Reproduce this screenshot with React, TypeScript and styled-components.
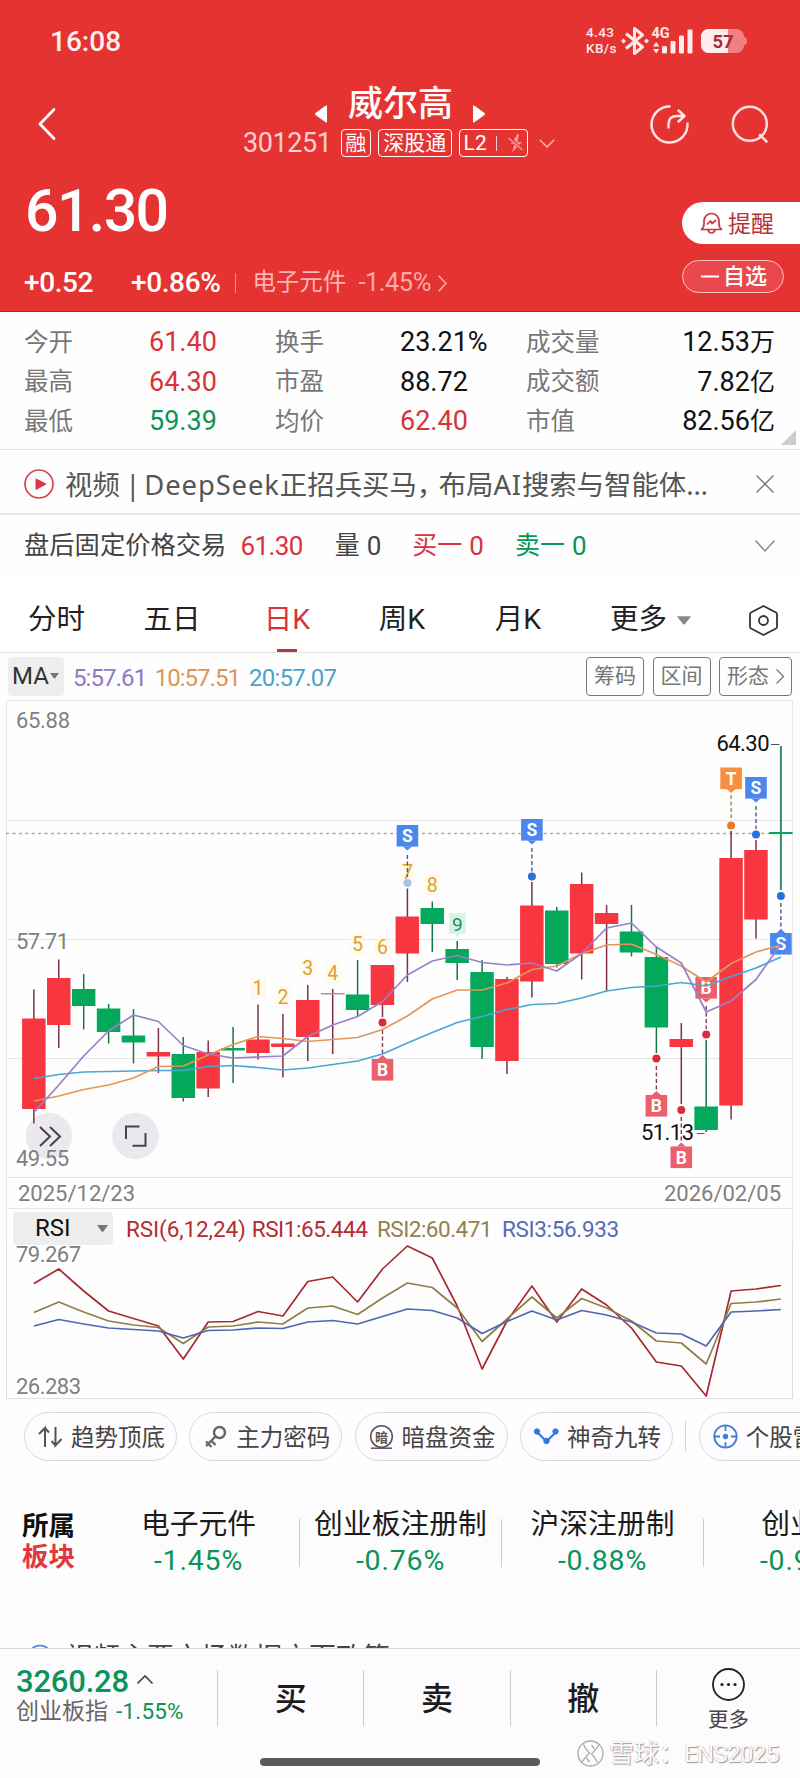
import React from 'react';
import styled, { createGlobalStyle } from 'styled-components';

const RED = '#e53332';
const UP = '#d8333a';
const DOWN = '#0a9457';
const FONT = `Roboto, "Noto Sans CJK SC", sans-serif`;

const Global = createGlobalStyle`
  * { box-sizing: border-box; }
  body { margin: 0; background: #fff; font-family: ${FONT}; color: #222; }
  svg { display: block; flex: none; overflow: visible; }
`;

const Page = styled.main`
  position: relative;
  display: flex;
  flex-direction: column;
  width: 800px;
  height: 1778px;
  overflow: hidden;
  background: #fefefe;
`;

const Txt = styled.span<{ s: number; c?: string; ls?: number; w?: number; ml?: number; mt?: number }>`
  flex: none;
  font-size: ${(p) => p.s}px;
  line-height: 1;
  white-space: nowrap;
  color: ${(p) => p.c ?? 'inherit'};
  letter-spacing: ${(p) => p.ls ?? 0}px;
  font-weight: ${(p) => p.w ?? 400};
  margin-left: ${(p) => p.ml ?? 0}px;
  margin-top: ${(p) => p.mt ?? 0}px;
`;

/* ---------- header ---------- */
const Header = styled.header`
  height: 312px;
  flex: none;
  background: ${RED};
  border-bottom: 1px solid #a32a2c;
  color: #fff;
`;
const StatusBar = styled.div`
  display: flex;
  align-items: center;
  height: 82px;
  padding: 0 53px 0 50px;
`;
const StatusIcons = styled.div`
  display: flex;
  align-items: center;
  margin-left: auto;
  color: #ffe9e9;
`;
const Speed = styled.div`
  display: flex;
  flex-direction: column;
  gap: 2px;
  width: 36px;
  padding-bottom: 3px;
  font-size: 13.5px;
  line-height: 14px;
  font-weight: 500;
  letter-spacing: 0.4px;
`;
const NavBar = styled.div`
  display: flex;
  height: 84px;
  padding: 0 48px 0 37px;
`;
const IconSlot = styled.div<{ w: number; pull?: number }>`
  display: flex;
  align-items: center;
  flex: none;
  width: ${(p) => p.w}px;
  margin-left: ${(p) => -(p.pull ?? 0)}px;
`;
const Title = styled.div`
  flex: none;
  width: 435px;
`;
const TitleLine = styled.div`
  display: flex;
  align-items: center;
  height: 44px;
  padding-left: 72px;
`;
const CodeLine = styled.div`
  display: flex;
  align-items: center;
  height: 34px;
`;
const Badge = styled.div<{ w: number; ml: number }>`
  display: flex;
  align-items: center;
  justify-content: center;
  width: ${(p) => p.w}px;
  height: 28px;
  margin-left: ${(p) => p.ml}px;
  border: 1.5px solid #fff;
  border-radius: 4px;
  font-size: 21px;
  line-height: 1;
  white-space: nowrap;
`;
const VBar = styled.i<{ h: number; c: string; ml?: number; mr?: number; w?: number }>`
  flex: none;
  width: ${(p) => p.w ?? 1}px;
  height: ${(p) => p.h}px;
  background: ${(p) => p.c};
  margin: 0 ${(p) => p.mr ?? 0}px 0 ${(p) => p.ml ?? 0}px;
`;
const Quote = styled.div`
  display: flex;
  justify-content: space-between;
`;
const PriceLine = styled.div`
  display: flex;
  align-items: center;
  height: 88px;
  padding-left: 25px;
`;
const ChangeLine = styled.div`
  display: flex;
  align-items: center;
  height: 58px;
  padding-left: 24px;
`;
const Actions = styled.div`
  width: 118px;
  padding-top: 36px;
`;
const Remind = styled.div`
  display: flex;
  align-items: center;
  height: 42px;
  padding-left: 18px;
  border-radius: 21px 0 0 21px;
  background: #fff;
`;
const Watch = styled.div`
  display: flex;
  align-items: center;
  width: 102px;
  height: 33px;
  margin-top: 16px;
  padding-left: 17px;
  border: 1px solid #ffc4c6;
  border-radius: 17px;
  background: #e9494c;
`;

/* ---------- quote table ---------- */
const Stats = styled.section`
  position: relative;
  flex: none;
  height: 138px;
  padding: 11px 25px 0 24px;
  border-bottom: 1px solid #dfdfdf;
`;
const StatRow = styled.div`
  display: grid;
  grid-template-columns: 125px 126px 125px 126px 1fr 130px;
  align-items: center;
  height: 39.5px;
  font-size: 24.5px;
  line-height: 1;
  color: #777;
  white-space: nowrap;
`;
const Val = styled.b<{ c?: string; end?: boolean }>`
  font-size: 27px;
  font-weight: 400;
  color: ${(p) => p.c ?? '#111'};
  text-align: ${(p) => (p.end ? 'right' : 'left')};
  & > small { font-size: 25px; }
`;
const Corner = styled.i`
  position: absolute;
  right: 4px;
  bottom: 4px;
  border-style: solid;
  border-width: 0 0 15px 15px;
  border-color: transparent transparent #ccc transparent;
`;
const News = styled.section`
  display: flex;
  align-items: center;
  flex: none;
  height: 65px;
  padding: 5px 26px 0 24px;
  border-bottom: 2px solid #e4e4e4;
`;
const NewsText = styled.div`
  flex: 1;
  margin: 2px 0 0 11px;
  font: 27.4px/1 "Noto Sans", "Noto Sans CJK SC", sans-serif;
  color: #555;
  white-space: nowrap;
`;
const Kern = styled.span<{ ls: number; mr?: number }>`
  letter-spacing: ${(p) => p.ls}px;
  margin-right: ${(p) => p.mr ?? 0}px;
`;
const AfterHours = styled.section`
  display: flex;
  align-items: center;
  flex: none;
  height: 61px;
  padding: 0 25px;
  color: #444;
`;
const Spring = styled.i`
  flex: 1;
`;

/* ---------- tabs / toolbar ---------- */
const Tabs = styled.nav`
  display: grid;
  grid-template-columns: 113px 118px 112px 118px 114px 151px 1fr;
  flex: none;
  height: 77px;
  border-bottom: 1px solid #e4e4e4;
  background: #fff;
`;
const Tab = styled.div<{ on?: boolean }>`
  position: relative;
  display: flex;
  align-items: center;
  justify-content: center;
  gap: 10px;
  font-size: 28.5px;
  line-height: 1;
  white-space: nowrap;
  padding-top: 12px;
  color: ${(p) => (p.on ? UP : '#222')};
  &::after {
    content: '';
    position: absolute;
    bottom: 0;
    left: calc(50% - 10px);
    width: 20px;
    height: 3px;
    background: ${(p) => (p.on ? '#c0343e' : 'transparent')};
  }
`;
const Toolbar = styled.div`
  display: flex;
  align-items: center;
  flex: none;
  height: 47px;
  padding: 0 8px 1px 8px;
`;
const Picker = styled.div<{ w: number; h: number; pl: number }>`
  display: flex;
  align-items: center;
  justify-content: space-between;
  width: ${(p) => p.w}px;
  height: ${(p) => p.h}px;
  padding: 0 5px 0 ${(p) => p.pl}px;
  border-radius: 4px;
  background: #eee;
  color: #333;
`;
const Tool = styled.div<{ w: number }>`
  display: flex;
  align-items: center;
  justify-content: center;
  gap: 7px;
  width: ${(p) => p.w}px;
  height: 39px;
  margin-left: 8.5px;
  padding-top: 1px;
  border: 1px solid #777;
  border-radius: 4px;
  font-size: 21px;
  line-height: 1;
  color: #777;
`;
const Dates = styled.div`
  display: flex;
  align-items: center;
  justify-content: space-between;
  flex: none;
  height: 31px;
  margin: 0 7px 0 6px;
  padding: 2px 11px 0 11px;
  border: 1px solid #e6e6e6;
  border-top: 0;
  color: #808080;
`;
const RsiHead = styled.div`
  display: flex;
  align-items: center;
  flex: none;
  height: 37px;
  margin: 0 7px 0 6px;
  padding: 1px 0 0 6px;
  border: solid #e6e6e6;
  border-width: 0 1px;
`;

/* ---------- pills ---------- */
const Pills = styled.section`
  display: flex;
  align-items: center;
  flex: none;
  height: 75px;
  padding-left: 24px;
  overflow: hidden;
`;
const Pill = styled.div`
  display: flex;
  align-items: center;
  gap: 8px;
  flex: none;
  width: 153px;
  height: 49px;
  margin-right: 12.3px;
  padding-left: 13px;
  border: 1px solid #dadada;
  border-radius: 25px;
  background: #fefcfe;
  color: #444;
`;
const Sector = styled.section`
  display: flex;
  flex: none;
  height: 127px;
  overflow: hidden;
`;
const SectorLabel = styled.div`
  width: 95px;
  flex: none;
  padding: 36px 0 0 22px;
  font-size: 26.5px;
  line-height: 31px;
  font-weight: 700;
  color: #111;
  & > em { display: block; font-style: normal; color: #e0393f; }
`;
const SectorList = styled.div`
  display: flex;
  align-items: center;
  flex: none;
  padding: 10px 0 0 3px;
  background: #fdfcfd;
`;
const SectorItem = styled.div`
  display: flex;
  flex-direction: column;
  align-items: center;
  gap: 8px;
  width: 201px;
`;
const Peek = styled.section`
  display: flex;
  align-items: flex-start;
  flex: none;
  height: 47px;
  padding: 44px 0 0 28px;
  overflow: hidden;
  color: #444;
`;

/* ---------- bottom bar ---------- */
const Bottom = styled.footer`
  display: flex;
  flex: none;
  height: 132px;
  padding-top: 21px;
  border-top: 1px solid #d8d8d8;
  background: #fdfbfd;
`;
const IndexBox = styled.div`
  width: 217px;
  margin-top: -4px;
  padding-left: 16px;
`;
const IndexLine = styled.div<{ h: number }>`
  display: flex;
  align-items: center;
  height: ${(p) => p.h}px;
`;
const Trade = styled.div`
  display: flex;
  align-items: center;
  justify-content: center;
  width: 146.4px;
  height: 56px;
  padding-top: 2px;
  border-left: 1px solid #ccc;
  font-size: 32px;
  font-weight: 500;
  line-height: 1;
  color: #1c1c1c;
`;
const More = styled.div`
  display: flex;
  flex-direction: column;
  align-items: center;
  width: 144px;
  height: 56px;
  gap: 9px;
  border-left: 1px solid #ccc;
  & > svg { margin-top: -2px; }
`;
const HomeBar = styled.i`
  position: absolute;
  left: 260px;
  bottom: 12px;
  width: 280px;
  height: 8px;
  border-radius: 4px;
  background: #5b5b5b;
`;
const Watermark = styled.div`
  position: absolute;
  left: 577px;
  bottom: 11px;
  display: flex;
  align-items: center;
  gap: 5px;
  font-size: 25px;
  line-height: 1;
  color: #fafafa;
  text-shadow: 1px 1px 1px #999, -0.5px -0.5px 0.5px #c4c4c4;
  white-space: nowrap;
  & em { font-style: normal; font-size: 24px; letter-spacing: -0.6px; }
`;

/* ---------- chart data ---------- */
const cx = (i: number) => 33.9 + 24.9 * i;
type Candle = [number, number, number, number, 'r' | 'g' | 'd'];
const candles: Candle[] = [
  [989.5, 1018.5, 1109, 1123.5, 'r'], [959.5, 978, 1025, 1048, 'r'], [974, 989, 1006, 1029.5, 'g'],
  [1004, 1008.5, 1032, 1043.5, 'g'], [1009, 1035.5, 1042.5, 1063.5, 'g'], [1028, 1052, 1056.5, 1073, 'r'],
  [1037, 1054, 1098, 1101.5, 'g'], [1040.5, 1052, 1088.5, 1097, 'r'], [1027, 1048, 1050.5, 1083, 'g'],
  [1004.5, 1039.5, 1053, 1059.5, 'r'], [1014, 1043.5, 1047, 1077.5, 'r'], [985, 1000, 1037, 1061, 'r'],
  [989, 993, 994.5, 1054, 'd'], [960, 994.5, 1010, 1016, 'g'], [965, 965, 1005, 1017, 'r'],
  [888.5, 916.5, 953.5, 982, 'r'], [901.5, 908, 924, 952, 'g'], [941, 949, 963, 980, 'g'],
  [960, 972, 1047, 1059, 'g'], [977, 979, 1061, 1074, 'r'], [882, 905.5, 981.5, 997.5, 'r'],
  [907, 910.5, 964, 967.5, 'g'], [872.5, 884, 953.5, 979.5, 'r'], [905, 913, 924, 991, 'r'],
  [905, 931.5, 952.5, 956.5, 'g'], [946, 957, 1027.5, 1053, 'g'], [1023, 1039, 1047, 1104, 'r'],
  [1040, 1106.5, 1130, 1132, 'g'], [831, 858, 1105.5, 1119.5, 'r'], [840, 850, 919.5, 938.5, 'r'],
  [746, 832, 834, 890, 'g'],
];
const ma5 = [1112.5, 1085, 1056, 1031, 1015, 1021.5, 1045.5, 1054, 1058, 1057, 1056, 1036.5, 1025, 1016.5, 1001.5, 975, 961, 955.5, 962.5, 965, 963, 971, 953.5, 928, 923, 947, 963, 1012, 1001, 979.5, 944];
const ma10 = [1101, 1096, 1089.5, 1085, 1078, 1066.5, 1066, 1055, 1044.5, 1036.5, 1038.5, 1041.5, 1039.5, 1037.5, 1029.5, 1016, 999, 990, 990, 983, 969.5, 966, 953.5, 945, 944, 954.5, 966, 982, 963.5, 952, 945];
const ma20 = [1078.5, 1074.5, 1072, 1071.5, 1071, 1070.5, 1070.5, 1066.5, 1065.5, 1067.5, 1070, 1068, 1064.5, 1061, 1054, 1043, 1032.5, 1022.5, 1016.5, 1009.5, 1004.5, 1003.5, 998, 991, 987.5, 986, 982.5, 986, 976.5, 968, 957];
const rsi1 = [1283.5, 1269, 1291, 1311, 1318.5, 1326, 1359, 1322, 1321.5, 1311.5, 1316, 1281.5, 1277, 1302, 1269, 1246, 1258, 1306, 1369, 1321, 1286, 1322, 1289, 1305, 1328, 1362, 1366, 1396, 1291, 1289, 1285.5];
const rsi2 = [1312.5, 1302, 1312, 1321, 1325, 1327.5, 1343.5, 1327, 1326, 1322, 1324, 1308, 1306, 1314.5, 1298, 1283, 1287.5, 1308, 1341.5, 1319, 1297, 1318, 1298.5, 1308, 1321, 1341, 1343, 1364, 1303.5, 1302, 1299];
const rsi3 = [1326, 1319.5, 1324, 1328, 1329.5, 1331, 1338, 1330.5, 1330, 1328, 1328.5, 1322, 1320.5, 1324, 1316.5, 1309, 1310.5, 1318, 1333.5, 1321.5, 1311, 1320, 1310.5, 1315, 1322, 1333, 1334, 1346, 1312, 1311, 1309.5];
const line = (ys: number[]) => ys.map((y, i) => `${cx(i)},${y}`).join(' ');

const BLUE = '#4a88ee';
const PINK = '#ec5f6d';
type Mark = { i: number; t: string; y: number; dir: 1 | -1; fill: string; dot: number; dc: string; d: [number, number] };
const marks: Mark[] = [
  { i: 15, t: 'S', y: 825, dir: 1, fill: BLUE, dot: 883, dc: '#a9c2ea', d: [855, 877] },
  { i: 20, t: 'S', y: 819, dir: 1, fill: BLUE, dot: 876.5, dc: '#2a70dc', d: [848, 872] },
  { i: 28, t: 'T', y: 767.5, dir: 1, fill: '#f78e42', dot: 825.5, dc: '#ee7820', d: [795, 818] },
  { i: 29, t: 'S', y: 777, dir: 1, fill: BLUE, dot: 834.5, dc: '#2a70dc', d: [806, 829] },
  { i: 30, t: 'S', y: 933, dir: -1, fill: BLUE, dot: 896, dc: '#2a70dc', d: [903, 930] },
  { i: 14, t: 'B', y: 1059, dir: -1, fill: PINK, dot: 1022.5, dc: '#db2c3c', d: [1030, 1056] },
  { i: 25, t: 'B', y: 1095, dir: -1, fill: PINK, dot: 1058.5, dc: '#db2c3c', d: [1066, 1092] },
  { i: 26, t: 'B', y: 1146.5, dir: -1, fill: PINK, dot: 1110, dc: '#db2c3c', d: [1117, 1143] },
  { i: 27, t: 'B', y: 977, dir: 1, fill: PINK, dot: 1034.5, dc: '#db2c3c', d: [1006, 1029] },
];
const turns: [number, string, number][] = [
  [9, '1', 995], [10, '2', 1004], [11, '3', 975], [12, '4', 979.5], [13, '5', 950.5], [14, '6', 954], [15, '7', 879], [16, '8', 892],
];

const Label = ({ x, y, w, c = '#808080', s = 22, children }: { x: number; y: number; w: number; c?: string; s?: number; children: string }) => (
  <text x={x} y={y} fontSize={s} fill={c} textLength={w} fontFamily={FONT}>{children}</text>
);

const KChart = () => (
  <svg width="800" height="478" viewBox="0 700 800 478">
    <g stroke="#e6e6e6" fill="none">
      <path d="M6.5 700.5H792.5M6.5 820.5H792.5M6.5 939.5H792.5M6.5 1058.5H792.5M6.5 1177.5H792.5M6.5 700.5V1178M792.5 700.5V1178" />
    </g>
    <path d="M6 833.5H770" stroke="#b3ac85" strokeWidth="1.4" strokeDasharray="3.2 3.2" />
    <g fill="#e9e7eb" fillOpacity=".92">
      <circle cx="49" cy="1136" r="23.3" />
      <circle cx="135.5" cy="1136" r="23.3" />
    </g>
    <path d="M40 1127l10 9.500-10 9.500M50 1127l10 9.500-10 9.500M126 1139v-12.500h13.500M145.500 1133v12.700h-13" fill="none" stroke="#444" strokeWidth="2" />
    {candles.map(([h, t, b, l, k], i) => {
      const body = k === 'r' ? '#f8363f' : k === 'g' ? '#04a85a' : '#b58fa0';
      const wick = k === 'g' ? '#14744a' : '#7c3044';
      return (
        <g key={i}>
          <path d={`M${cx(i)} ${h}V${l}`} stroke={i === 30 ? '#2f9068' : wick} strokeWidth={i === 30 ? 2 : 1.5} />
          <rect x={cx(i) - 11.8} y={t} width="23.500" height={b - t} fill={body} />
        </g>
      );
    })}
    {turns.map(([i, t, y]) => (
      <g key={t}>
        <rect x={cx(i) - 8} y={y - 18} width="16" height="22" fill="#fff7e4" fillOpacity=".6" />
        <text x={cx(i)} y={y} fontSize="19.500" textAnchor="middle" fill="#dfa02c" fontFamily={FONT}>{t}</text>
      </g>
    ))}
    <path d="M449 913h16.500v21h-5.500l-2.700 3-2.700-3h-5.600z" fill="#d6f3e6" />
    <text x="457.300" y="930.500" fontSize="19" textAnchor="middle" fill="#17945f" fontFamily={FONT}>9</text>
    <Label x={641} y={1139.500} w={53} c="#111">51.13</Label>
    <Label x={716.500} y={751} w={53} c="#111">64.30</Label>
    <path d="M771 744.500h8.500M697 1133.500h7.500" stroke="#555" />
    {marks.map((m) => {
      const x = cx(m.i);
      const edge = m.dir === 1 ? m.y + 21.5 : m.y;
      return (
        <g key={m.i}>
          <path d={`M${x} ${m.d[0]}V${m.d[1]}`} stroke={m.t === 'S' ? '#4c5a80' : m.t === 'T' ? '#b08048' : '#85384e'} strokeWidth="1.4" strokeDasharray="4 2.500" />
          <circle cx={x} cy={m.dot} r="4" fill={m.dc} />
          <rect x={x - 10.8} y={m.y} width="21.600" height="21.600" fill={m.fill} />
          <path d={`M${x - 4.5} ${edge}h9l-4.500 ${4 * m.dir}z`} fill={m.fill} />
          <text x={x} y={m.y + 17} fontSize="17.500" fontWeight="700" textAnchor="middle" fill="#fff" fontFamily={FONT}>{m.t}</text>
        </g>
      );
    })}
    <g fill="none" strokeWidth="1.700" strokeLinejoin="round">
      <polyline points={line(ma20)} stroke="#4aa6d3" />
      <polyline points={line(ma10)} stroke="#e2965a" />
      <polyline points={line(ma5)} stroke="#9a80c8" />
    </g>
    <Label x={16} y={728} w={54}>65.88</Label>
    <Label x={16} y={949} w={53}>57.71</Label>
    <Label x={16} y={1165.500} w={53}>49.55</Label>
  </svg>
);

const RsiChart = () => (
  <svg width="800" height="153" viewBox="0 1246 800 153">
    <path d="M6.500 1246V1398.500H792.500V1246" stroke="#dedede" fill="none" />
    <Label x={16} y={1262} w={65}>79.267</Label>
    <Label x={16} y={1394} w={65}>26.283</Label>
    <g fill="none" strokeWidth="1.700" strokeLinejoin="round">
      <polyline points={line(rsi1)} stroke="#a82830" />
      <polyline points={line(rsi2)} stroke="#8f7d48" />
      <polyline points={line(rsi3)} stroke="#4f66b0" />
    </g>
  </svg>
);

const Caret = ({ w = 9, c = '#777' }) => (
  <svg width={w} height={w * 0.62} viewBox="0 0 10 6"><path d="M0 0h10L5.800 5.700q-.8.600-1.600 0z" fill={c} /></svg>
);

const Shift = styled.span<{ l?: number; t?: number; b?: number }>`
  flex: none;
  margin: ${(p) => p.t ?? 0}px 0 ${(p) => p.b ?? 0}px ${(p) => p.l ?? 0}px;
`;

const stats = [
  ['今开', '61.40', UP, '换手', '23.21%', '', '成交量', '12.53', '万'],
  ['最高', '64.30', UP, '市盈', '88.72', '', '成交额', '7.82', '亿'],
  ['最低', '59.39', DOWN, '均价', '62.40', UP, '市值', '82.56', '亿'],
];
const sectors = [['电子元件', '-1.45%'], ['创业板注册制', '-0.76%'], ['沪深注册制', '-0.88%'], ['创业板', '-0.95%']];

export default function App() {
  return (
    <Page>
      <Global />
      <Header>
        <StatusBar>
          <Txt s={28} w={500} c="#ffeeee" mt={1}>16:08</Txt>
          <StatusIcons>
            <Speed><span>4.43</span><span>KB/s</span></Speed>
            <svg width="26" height="28" viewBox="0 0 26 28" fill="none" stroke="currentColor" strokeWidth="3" strokeLinejoin="round">
              <path d="M4 6.500l16.500 13.500-8 6.500v-25l8 6.500L4 21.500" />
              <path d="M1.500 11.500L4 14l-2.500 2.500L-1 14zM24.500 11.500L27 14l-2.500 2.500L22 14z" fill="currentColor" stroke="none" />
            </svg>
            <Shift l={4}>
              <svg width="42" height="28" viewBox="0 0 42 28" fill="currentColor">
                <text x="-.5" y="10.500" fontSize="14.500" fontWeight="700" fontFamily={FONT}>4G</text>
                <path d="M1 19.500l3.200-4.500 3.200 4.500zM1 22l3.200 4.500L7.400 22z" />
                <rect x="10" y="19" width="5" height="7.500" rx="1.200" /><rect x="18.500" y="14" width="5" height="12.500" rx="1.200" />
                <rect x="27" y="8.500" width="5" height="18" rx="1.200" /><rect x="35.500" y="2.500" width="5" height="24" rx="1.200" />
              </svg>
            </Shift>
            <Shift l={7}>
              <svg width="46" height="24" viewBox="0 0 46 24">
                <rect width="43" height="24" rx="7.500" fill="#f28083" /><path d="M43 7.500q3 1 3 4.500t-3 4.500z" fill="#f28083" />
                <path d="M7.500 0H27v24H7.500A7.500 7.500 0 0 1 0 16.500v-9A7.500 7.500 0 0 1 7.500 0z" fill="#ffefef" />
                <text x="22" y="18.500" fontSize="18.500" fontWeight="700" textAnchor="middle" fill="#a82c33" fontFamily={FONT}>57</text>
              </svg>
            </Shift>
          </StatusIcons>
        </StatusBar>
        <NavBar>
          <IconSlot w={206}>
            <svg width="20" height="32" viewBox="0 0 20 32"><path d="M17 1.500L3 16l14 14.500" fill="none" stroke="#fff" strokeWidth="2.800" strokeLinecap="round" strokeLinejoin="round" /></svg>
          </IconSlot>
          <Title>
            <TitleLine>
              <Shift t={20}><svg width="12" height="18" viewBox="0 0 12 18"><path d="M12 1v16q-.3 1-1.500.3L.5 10Q-.5 9 .5 8L10.500.7Q11.700 0 12 1z" fill="#fff" /></svg></Shift>
              <Txt s={35} w={500} ml={21} mt={1}>威尔高</Txt>
              <Shift t={20} l={20}><svg width="12" height="18" viewBox="0 0 12 18"><path d="M0 1v16q.3 1 1.500.3L11.500 10q1-1 0-2L1.500.7Q.3 0 0 1z" fill="#fff" /></svg></Shift>
            </TitleLine>
            <CodeLine>
              <Txt s={27} c="#ffcfcf" ls={-0.4}>301251</Txt>
              <Badge w={30} ml={9}>融</Badge>
              <Badge w={74} ml={7}>深股通</Badge>
              <Badge w={69} ml={7}>
                L2
                <VBar h={15} c="#ffd0d0" ml={9} mr={12} />
                <svg width="14" height="19" viewBox="0 0 14 19"><path d="M8.500 0L2 10h3.500L3 18.500 13 8H8.500L10 0z" fill="#f79a9c" /><path d="M-.5 2.500l14 14" stroke={RED} strokeWidth="3" /><path d="M-.5 4l14 12" stroke="#f79a9c" strokeWidth="1.500" /></svg>
              </Badge>
              <Shift l={11}><svg width="16" height="9" viewBox="0 0 16 9"><path d="M.7.7L8 8 15.300.7" fill="none" stroke="#ffb0b0" strokeWidth="1.500" /></svg></Shift>
            </CodeLine>
          </Title>
          <IconSlot w={81} pull={28}>
            <svg width="39" height="39" viewBox="0 0 39 39" fill="none" stroke="#ffe6e6" strokeWidth="2.400" strokeLinecap="round">
              <path d="M19.500 1.500A18 18 0 1 0 37.500 18.500" /><path d="M18.500 22.500v-3q0-8.500 8.500-8.500h7M28.500 5.500l6 5.500-6 5.500" strokeLinejoin="round" />
            </svg>
          </IconSlot>
          <IconSlot w={38}>
            <svg width="38" height="38" viewBox="0 0 38 38" fill="none" stroke="#ffdede" strokeWidth="2.500" strokeLinecap="round">
              <circle cx="18.800" cy="18.800" r="17" /><path d="M29 30l6.500 6.500" />
            </svg>
          </IconSlot>
        </NavBar>
        <Quote>
          <div>
            <PriceLine><Txt s={59} w={500} ls={-1.6}>61.30</Txt></PriceLine>
            <ChangeLine>
              <Txt s={28} w={500} ls={-0.4}>+0.52</Txt>
              <Txt s={28} w={500} ml={38} ls={-0.4}>+0.86%</Txt>
              <VBar h={20} c="#f28a8c" ml={15} mr={16} />
              <Txt s={23.5} c="#ffb3b3">电子元件</Txt>
              <Txt s={25.5} c="#ffa9a9" ml={12} ls={-0.5}>-1.45%</Txt>
              <Shift l={7}><svg width="9" height="17" viewBox="0 0 9 17"><path d="M.7.7L8 8.500.7 16.300" fill="none" stroke="#ffb0b0" strokeWidth="1.400" /></svg></Shift>
            </ChangeLine>
          </div>
          <Actions>
            <Remind>
              <svg width="23" height="22" viewBox="0 0 23 22" fill="none" stroke="#c93640" strokeWidth="1.700" strokeLinejoin="round" strokeLinecap="round">
                <path d="M1.500 17.500h20q-2.500-2-2.500-6V9a7.500 7.500 0 0 0-15 0v2.500q0 4-2.500 6M8 18q1 3 3.500 3t3.500-3M7.500 12l3-3 1.500 2.500 3.500-3" />
              </svg>
              <Txt s={23} c="#b8323a" ml={5} mt={2}>提醒</Txt>
            </Remind>
            <Watch>
              <svg width="20" height="3" viewBox="0 0 20 3"><path d="M1 1.500h18" stroke="#fff" strokeWidth="2" /></svg>
              <Txt s={22} ml={3} w={500} mt={1}>自选</Txt>
            </Watch>
          </Actions>
        </Quote>
      </Header>

      <Stats>
        {stats.map((r) => (
          <StatRow key={r[0]}>
            <span>{r[0]}</span><Val c={r[2]}>{r[1]}</Val>
            <span>{r[3]}</span><Val c={r[5] || undefined}>{r[4]}</Val>
            <span>{r[6]}</span><Val end>{r[7]}<small>{r[8]}</small></Val>
          </StatRow>
        ))}
        <Corner />
      </Stats>

      <News>
        <svg width="30" height="30" viewBox="0 0 30 30"><circle cx="15" cy="15" r="14" fill="none" stroke="#dd4450" strokeWidth="1.700" /><path d="M12 10l10 5-10 5.500z" fill="#e03542" stroke="#e03542" strokeLinejoin="round" /></svg>
        <NewsText>
          视频<Kern ls={-1.6}> | </Kern><Kern ls={0.9}>DeepSeek</Kern>正招兵买马<Kern ls={-5.5}>，</Kern>布局<Kern ls={0.8}>AI</Kern>搜索与智能体<Kern ls={0}>…</Kern>
        </NewsText>
        <svg width="18" height="18" viewBox="0 0 18 18"><path d="M.5.500l17 17M17.500.500l-17 17" stroke="#777" strokeWidth="1.400" /></svg>
      </News>
      <AfterHours>
        <Txt s={25.3} ml={-1}>盘后固定价格交易</Txt>
        <Txt s={26} c={UP} ml={14} ls={-0.6}>61.30</Txt>
        <Txt s={25} ml={32}>量</Txt><Txt s={26} ml={7}>0</Txt>
        <Txt s={25} c={UP} ml={31}>买一</Txt><Txt s={26} c={UP} ml={7}>0</Txt>
        <Txt s={25} c={DOWN} ml={31}>卖一</Txt><Txt s={26} c={DOWN} ml={7}>0</Txt>
        <Spring />
        <svg width="20" height="12" viewBox="0 0 20 12"><path d="M.5.500L10 11 19.500.500" fill="none" stroke="#888" strokeWidth="1.400" /></svg>
      </AfterHours>

      <Tabs>
        <Tab>分时</Tab><Tab>五日</Tab><Tab on>日K</Tab><Tab>周K</Tab><Tab>月K</Tab>
        <Tab>更多<Caret w={14} c="#888" /></Tab>
        <Tab>
          <svg width="29" height="31" viewBox="0 0 29 31" fill="none" stroke="#333" strokeWidth="1.800" strokeLinejoin="round">
            <path d="M14.500 1L27 7.500q1 .5 1 2v12q0 1.500-1 2L14.500 30 2 23.500q-1-.5-1-2v-12q0-1.500 1-2z" /><circle cx="14.500" cy="15.500" r="4.500" />
          </svg>
        </Tab>
      </Tabs>

      <Toolbar>
        <Picker w={56} h={39} pl={4}><Txt s={24}>MA</Txt><Caret w={9} /></Picker>
        <Txt s={24} c="#9078c4" ml={9} mt={3} ls={-0.9}>5:57.61</Txt>
        <Txt s={24} c="#dd9556" ml={8.5} mt={3} ls={-1}>10:57.51</Txt>
        <Txt s={24} c="#4aa3cc" ml={9} mt={3} ls={-0.7}>20:57.07</Txt>
        <Spring />
        <Tool w={58}>筹码</Tool><Tool w={58}>区间</Tool>
        <Tool w={73}>形态<svg width="8" height="15" viewBox="0 0 8 15"><path d="M.5.500l7 7-7 7" fill="none" stroke="#777" strokeWidth="1.300" /></svg></Tool>
      </Toolbar>
      <KChart />
      <Dates><Txt s={22}>2025/12/23</Txt><Txt s={22}>2026/02/05</Txt></Dates>
      <RsiHead>
        <Picker w={100} h={33} pl={22}><Txt s={24} c="#111">RSI</Txt><Caret w={11} /></Picker>
        <Txt s={22.5} c="#b52b31" ml={13} mt={2} ls={-0.1}>RSI(6,12,24)</Txt>
        <Txt s={22.5} c="#b52b31" ml={6} mt={2} ls={-0.45}>RSI1:65.444</Txt>
        <Txt s={22.5} c="#94804a" ml={9.5} mt={2} ls={-0.5}>RSI2:60.471</Txt>
        <Txt s={22.5} c="#566bb4" ml={10} mt={2} ls={-0.35}>RSI3:56.933</Txt>
      </RsiHead>
      <RsiChart />

      <Pills>
        <Pill>
          <svg width="25" height="20" viewBox="0 0 25 20" fill="none" stroke="#555" strokeWidth="2"><path d="M1 7l6-6v19M7 1l4 4.500M17.500 0v18.500l6-6.500M17.500 18.500l-4-4.500" /></svg>
          <Txt s={23.5} mt={4}>趋势顶底</Txt>
        </Pill>
        <Pill>
          <svg width="25" height="22" viewBox="0 0 25 22" fill="none" stroke="#666" strokeWidth="2.400"><circle cx="16.500" cy="6.500" r="5.500" /><path d="M12.500 10.500L3 20M8.500 15l4 4M4.500 15.500l-1.500 1.500M5.500 18l3 3" /></svg>
          <Txt s={23.5} mt={4}>主力密码</Txt>
        </Pill>
        <Pill>
          <svg width="25" height="24" viewBox="0 0 25 24" fill="none" stroke="#555" strokeWidth="1.500"><circle cx="12.500" cy="11.500" r="10.800" /><path d="M2 23.200h21" /><text x="12.500" y="16.500" fontSize="13" fontWeight="700" textAnchor="middle" fill="#555" stroke="none" fontFamily={FONT}>暗</text></svg>
          <Txt s={23.5} mt={4}>暗盘资金</Txt>
        </Pill>
        <Pill>
          <svg width="25" height="17" viewBox="0 0 25 17" fill="#2f7ae0" stroke="#2f7ae0"><path d="M3 4l9.500 9.500L22 4" fill="none" strokeWidth="2" /><circle cx="3" cy="3.500" r="2.700" /><circle cx="12.500" cy="13" r="2.700" /><circle cx="21.500" cy="3.500" r="2.700" /></svg>
          <Txt s={23.5} mt={4}>神奇九转</Txt>
        </Pill>
        <VBar h={31} c="#d4d4d4" mr={12.5} />
        <Pill>
          <svg width="25" height="25" viewBox="0 0 25 25" fill="none" stroke="#3f7fd8" strokeWidth="1.800"><circle cx="12.500" cy="12.500" r="11.200" /><path d="M12.500 2v5M12.500 18v5M2 12.500h5M18 12.500h5" /><circle cx="12.500" cy="12.500" r="1.800" fill="#3f7fd8" /></svg>
          <Txt s={23.5} mt={4}>个股雷达</Txt>
        </Pill>
      </Pills>

      <Sector>
        <SectorLabel>所属<em>板块</em></SectorLabel>
        <SectorList>
          {sectors.map(([n, v], i) => (
            <React.Fragment key={n}>
              {i > 0 && <VBar h={48} c="#ccc" />}
              <SectorItem><Txt s={28.8} c="#1c1c1c">{n}</Txt><Txt s={28.5} c={DOWN} ls={0.8}>{v}</Txt></SectorItem>
            </React.Fragment>
          ))}
        </SectorList>
      </Sector>
      <Peek>
        <svg width="24" height="24" viewBox="0 0 24 24"><circle cx="12" cy="12" r="11.500" fill="none" stroke="#3f7fd8" strokeWidth="1.600" /></svg>
        <Txt s={27} ml={14}>视频主要市场数据方面政策</Txt>
      </Peek>

      <Bottom>
        <IndexBox>
          <IndexLine h={31}><Txt s={31} c={DOWN} w={500} ls={-0.2}>3260.28</Txt><Shift l={8} b={5}><svg width="16" height="9" viewBox="0 0 16 9"><path d="M.5 8.500L8 1l7.500 7.500" fill="none" stroke="#444" strokeWidth="1.700" /></svg></Shift></IndexLine>
          <IndexLine h={29}><Txt s={23} c="#666">创业板指</Txt><Txt s={22.5} c={DOWN} ml={8} ls={0.2}>-1.55%</Txt></IndexLine>
        </IndexBox>
        <Trade>买</Trade><Trade>卖</Trade><Trade>撤</Trade>
        <More>
          <svg width="33" height="33" viewBox="0 0 33 33"><circle cx="16.500" cy="16.500" r="15.500" fill="none" stroke="#222" strokeWidth="1.800" /><g fill="#222"><circle cx="10" cy="16.500" r="1.600" /><circle cx="16.500" cy="16.500" r="1.600" /><circle cx="23" cy="16.500" r="1.600" /></g></svg>
          <Txt s={20.5} c="#444">更多</Txt>
        </More>
      </Bottom>
      <HomeBar />
      <Watermark>
        <svg width="27" height="27" viewBox="0 0 27 27" fill="none" stroke="#aaa" strokeWidth="1.300"><circle cx="13.500" cy="13.500" r="12.500" /><path d="M6.500 4.500q2.500 5.500 6 8.500-4.500 4.500-8 9.500M20.500 22.500q-2.500-5.500-6-8.500 4.500-4.500 8-9.500M14.500 5l3 4M9.500 18l3 4" /></svg>
        <span>雪球：<em>ENS2025</em></span>
      </Watermark>
    </Page>
  );
}
